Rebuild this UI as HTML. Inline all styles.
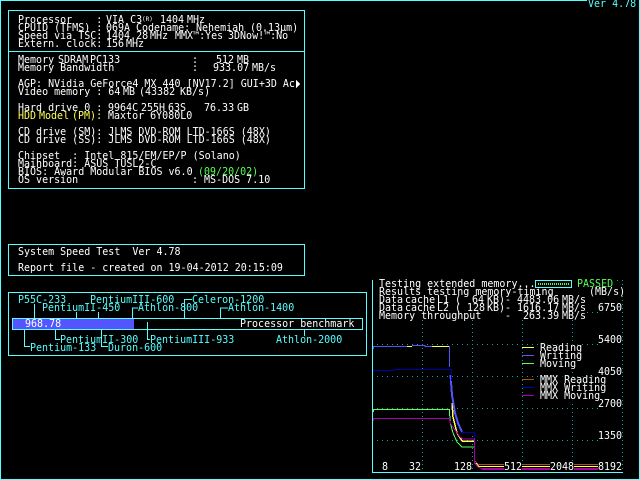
<!DOCTYPE html>
<html><head><meta charset="utf-8"><style>
html,body{margin:0;padding:0;background:#000;width:640px;height:480px;overflow:hidden}
#p{position:relative;width:640px;height:480px;overflow:hidden;background:#000;font:10px/8px "DejaVu Sans Mono","Liberation Mono",monospace;color:#fff}
#p span{position:absolute;white-space:pre;height:8px;transform:translateY(.5px) scaleY(1.05);transform-origin:0 0}
svg{position:absolute;left:0;top:0}
.c{color:#55ffff}.y{color:#ffff55}.g{color:#55ff55}
.k{background:#000}
</style></head><body><div id="p">
<svg width="640" height="480" shape-rendering="crispEdges" fill="none">
<g stroke="#55ffff">
<path d="M0 .5H587M.5 0V480M0 479.5H640M639.5 0V480"/>
<rect x="8.5" y="10.5" width="296" height="178"/><path d="M8 51.5H304"/>
<rect x="8.5" y="244.5" width="296" height="31"/>
<rect x="8.5" y="292.5" width="358" height="63"/>
<rect x="12.5" y="318.5" width="350" height="11"/>
<path d="M34.5 304V318M76.5 312V318M98.5 312V318M132.5 318V308H138M184.5 318V299.5H192M220.5 318V308H228M24.5 330V346.5H30M55.5 330V339.5H60M101.5 330V346.5H108M147.5 330V339.5H150M304.5 330V336M147.5 322V329"/>
</g>
<rect x="13" y="319" width="121" height="10" fill="#5555ff"/>
<g stroke="#00aaaa">
<path stroke-dasharray="1 3" d="M422.5 280V472M472.5 280V472M522.5 280V472M572.5 280V472M622.5 280V472"/>
<path stroke-dasharray="1 4" d="M372 280.5H623M372 312.5H623M372 344.5H623M372 376.5H623M372 408.5H623M372 440.5H623"/>
</g>
<path fill="#000" d="M373 280H586V320H373ZM586 280H613V288H586ZM586 288H626V296H586Z"/>
<path stroke="#55ffff" d="M372.5 280V472.5H623"/>
<rect x="535.5" y="280.5" width="36" height="7" stroke="#55ffff"/>
<path d="M538 283.5H569M538 284.5H569" stroke="#55ff55" stroke-dasharray="1 1"/>
<g fill="none">
<path stroke="#ffff55" d="M407 346.5H412M432 346.5H449.5"/>
<path stroke="#ffff55" stroke-width="1.5" d="M452 403L453 417 457 433 462 441 470 441.5 474 441"/>
<path stroke="#5555ff" d="M373.5 349V346.5H407M412 345.5H425V346.5H432M449.5 346V367"/>
<path stroke="#5555ff" stroke-width="2" d="M450.5 375L452 395 455 413 458 423 462 432"/>
<path stroke="#55ff55" d="M373.5 412V409.5H449.5L450 422 453 433 457 442 462 447H474"/>
<path stroke="#aa5500" d="M470 432.5H473M475 461L478 464.5H622"/>
<path stroke="#ffff55" d="M476 463L479 466.5H622"/>
<path stroke="#0000aa" d="M373.5 372V370.5H394V369.5H451.5V381M462 432.5H474.5V445"/>
<path stroke="#aa00aa" d="M373.5 421V418.5H449.5L450 423 455 430 460 437 463 439H474.5V463L478 467 482 469"/>
<path stroke="#aa00aa" stroke-width="2" d="M482 469H622"/>
</g>
<path stroke="#ffff55" d="M522 347.5H534"/>
<path stroke="#5555ff" d="M522 355.5H534"/>
<path stroke="#55ff55" d="M522 363.5H534"/>
<path stroke="#aa5500" d="M522 379.5H534"/>
<path stroke="#0000aa" d="M522 387.5H534"/>
<path stroke="#aa00aa" d="M522 395.5H534"/>
<path d="M296 80V88L300 84Z" fill="#fff"/>
</svg>

<span class="c" style="left:588px;top:0">Ver 4.78</span>

<span style="left:18px;top:16px">Processor    :</span><span style="left:106px;top:16px">VIA C3</span><span style="left:142px;top:15px;font-size:6px">(R)</span><span style="left:160px;top:16px">1404</span><span style="left:187px;top:16px">MHz</span>
<span style="left:18px;top:24px">CPUID (TFMS) :</span><span style="left:106px;top:24px">069A</span><span style="left:136px;top:24px">Codename:</span><span style="left:196px;top:24px">Nehemiah</span><span style="left:250px;top:24px">(0.13µm)</span>
<span style="left:18px;top:32px">Speed via TSC:</span><span style="left:106px;top:32px">1404.28</span><span style="left:150px;top:32px">MHz</span><span style="left:175px;top:32px">MMX™:Yes</span><span style="left:228px;top:32px">3DNow!™:No</span>
<span style="left:18px;top:40px">Extern. clock:</span><span style="left:106px;top:40px">156</span><span style="left:126px;top:40px">MHz</span>

<span style="left:18px;top:56px">Memory</span><span style="left:58px;top:56px">SDRAM</span><span style="left:90px;top:56px">PC133</span><span style="left:192px;top:56px">:</span><span style="left:216px;top:56px">512</span><span style="left:237px;top:56px">MB</span>
<span style="left:18px;top:64px">Memory Bandwidth</span><span style="left:192px;top:64px">:</span><span style="left:213px;top:64px">933.07</span><span style="left:252px;top:64px">MB/s</span>
<span style="left:18px;top:80px">AGP: NVidia GeForce4 MX 440 [NV17.2] GUI+3D Ac</span>
<span style="left:18px;top:88px">Video memory : 64</span><span style="left:123px;top:88px">MB</span><span style="left:139px;top:88px">(43382</span><span style="left:180px;top:88px">KB/s)</span>
<span style="left:18px;top:104px">Hard drive 0 :</span><span style="left:108px;top:104px">9964C</span><span style="left:141px;top:104px">255H</span><span style="left:168px;top:104px">63S</span><span style="left:204px;top:104px">76.33</span><span style="left:237px;top:104px">GB</span>
<span class="y" style="left:18px;top:112px">HDD</span><span class="y" style="left:39px;top:112px">Model</span><span class="y" style="left:72px;top:112px">(PM):</span><span style="left:108px;top:112px">Maxtor 6Y080L0</span>
<span style="left:18px;top:128px">CD drive (SM): JLMS DVD-ROM LTD-166S (48X)</span>
<span style="left:18px;top:136px">CD drive (SS): JLMS DVD-ROM LTD-166S (48X)</span>
<span style="left:18px;top:152px">Chipset  : Intel 815/EM/EP/P (Solano)</span>
<span style="left:18px;top:160px">Mainboard: ASUS TUSL2-C</span>
<span style="left:18px;top:168px">BIOS: Award Modular BIOS v6.0</span><span class="g" style="left:198px;top:168px">(09/20/02)</span>
<span style="left:18px;top:176px">OS version</span><span style="left:192px;top:176px">: MS-DOS 7.10</span>

<span style="left:18px;top:248px">System Speed Test  Ver 4.78</span>
<span style="left:18px;top:264px">Report file - created on 19-04-2012 20:15:09</span>

<span class="c" style="left:18px;top:296px">P55C-233</span>
<span class="c" style="left:90px;top:296px">PentiumIII-600</span>
<span class="c" style="left:192px;top:296px">Celeron-1200</span>
<span class="c" style="left:42px;top:304px">PentiumII-450</span>
<span class="c" style="left:138px;top:304px">Athlon-800</span>
<span class="c" style="left:228px;top:304px">Athlon-1400</span>
<span style="left:25px;top:320px">968.78</span>
<span style="left:240px;top:320px">Processor benchmark</span>
<span class="c" style="left:60px;top:336px">PentiumII-300</span>
<span class="c" style="left:150px;top:336px">PentiumIII-933</span>
<span class="c" style="left:276px;top:336px">Athlon-2000</span>
<span class="c" style="left:30px;top:344px">Pentium-133</span>
<span class="c" style="left:108px;top:344px">Duron-600</span>

<span style="left:379px;top:280px">Testing extended memory...</span>
<span class="g" style="left:577px;top:280px">PASSED</span>
<span style="left:379px;top:288px">Results testing memory-timing</span>
<span style="left:589px;top:288px">(MB/s)</span>
<span style="left:379px;top:296px">Data</span><span style="left:405px;top:296px">cache</span><span style="left:437px;top:296px">L1</span><span style="left:455px;top:296px">(</span><span style="left:472px;top:296px">64</span><span style="left:487px;top:296px">KB)</span><span style="left:505px;top:296px">-</span><span style="left:517px;top:296px">4483.06</span><span style="left:562px;top:296px">MB/s</span>
<span style="left:379px;top:304px">Data</span><span style="left:405px;top:304px">cache</span><span style="left:437px;top:304px">L2</span><span style="left:455px;top:304px">(</span><span style="left:467px;top:304px">128</span><span style="left:487px;top:304px">KB)</span><span style="left:505px;top:304px">-</span><span style="left:517px;top:304px">1616.17</span><span style="left:562px;top:304px">MB/s</span>
<span class="k" style="left:598px;top:304px">6750</span>
<span style="left:379px;top:312px">Memory throughput</span>
<span style="left:505px;top:312px">-</span>
<span style="left:523px;top:312px">263.39</span><span style="left:562px;top:312px">MB/s</span>
<span class="k" style="left:598px;top:336px">5400</span>
<span class="k" style="left:598px;top:368px">4050</span>
<span class="k" style="left:598px;top:400px">2700</span>
<span class="k" style="left:598px;top:432px">1350</span>
<span class="k" style="left:540px;top:344px">Reading</span>
<span class="k" style="left:540px;top:352px">Writing</span>
<span class="k" style="left:540px;top:360px">Moving</span>
<span class="k" style="left:540px;top:376px">MMX Reading</span>
<span class="k" style="left:540px;top:384px">MMX Writing</span>
<span class="k" style="left:540px;top:392px">MMX Moving</span>
<span class="k" style="left:382px;top:463px">8</span>
<span class="k" style="left:409px;top:463px">32</span>
<span class="k" style="left:454px;top:463px">128</span>
<span class="k" style="left:504px;top:463px">512</span>
<span class="k" style="left:550px;top:463px">2048</span>
<span class="k" style="left:598px;top:463px">8192</span>
</div></body></html>
